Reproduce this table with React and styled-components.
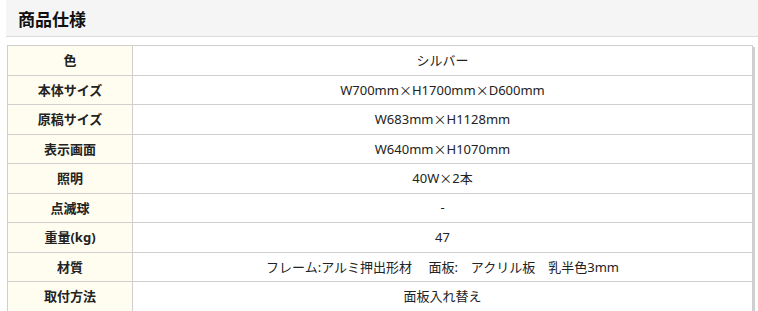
import React from "react";
import styled, { createGlobalStyle } from "styled-components";

// STYLING
const Global = createGlobalStyle`
  body {
    margin: 0;
    background: #fff;
    font-family: "Noto Sans", "Noto Sans CJK JP", sans-serif;
    color: #333;
  }
`;

const Section = styled.section`
  padding: 0 0 0 6px;
`;

const Heading = styled.h2`
  margin: 0;
  height: 36px;
  padding: 0 12px;
  display: flex;
  align-items: center;
  background: #f5f5f5;
  border-bottom: 1px solid #dcdcdc;
  font-family: "Noto Sans CJK JP", sans-serif;
  font-size: 17px;
  font-weight: bold;
  color: #111;
`;

const Table = styled.table`
  margin: 8px 0 0 1px;
  width: 746px;
  border-collapse: collapse;
  box-shadow: 2px 2px 0 #d0d0d0;
  font-size: 13px;
`;

const Row = styled.tr`
  height: 29.5px;
`;

const Label = styled.th`
  width: 108px;
  padding: 0 8px 1px;
  background: #fffdf0;
  border: 1px solid #cfcfcf;
  font-weight: bold;
  text-align: center;
  color: #222;
`;

const Value = styled.td`
  padding: 0 8px 1px;
  border: 1px solid #cfcfcf;
  text-align: center;
  color: #222;
  white-space: pre;
`;

const Times = styled.span`
  font-family: "Noto Sans CJK JP", sans-serif;
`;

const specs = [
  ["色", "シルバー"],
  ["本体サイズ", "W700mm×H1700mm×D600mm"],
  ["原稿サイズ", "W683mm×H1128mm"],
  ["表示画面", "W640mm×H1070mm"],
  ["照明", "40W×2本"],
  ["点滅球", "-"],
  ["重量(kg)", "47"],
  ["材質", "フレーム:アルミ押出形材　 面板:　アクリル板　乳半色3mm"],
  ["取付方法", "面板入れ替え"],
];

// the multiplication sign is full width in the original font
function withTimes(text) {
  return text.split(/(×)/).map((part, i) =>
    part === "×" ? <Times key={i}>×</Times> : part
  );
}

function App() {
  return (
    <Section>
      <Global />
      <Heading>商品仕様</Heading>
      <Table>
        <tbody>
          {specs.map(([label, value]) => (
            <Row key={label}>
              <Label>{label}</Label>
              <Value>{withTimes(value)}</Value>
            </Row>
          ))}
        </tbody>
      </Table>
    </Section>
  );
}

export default App;
